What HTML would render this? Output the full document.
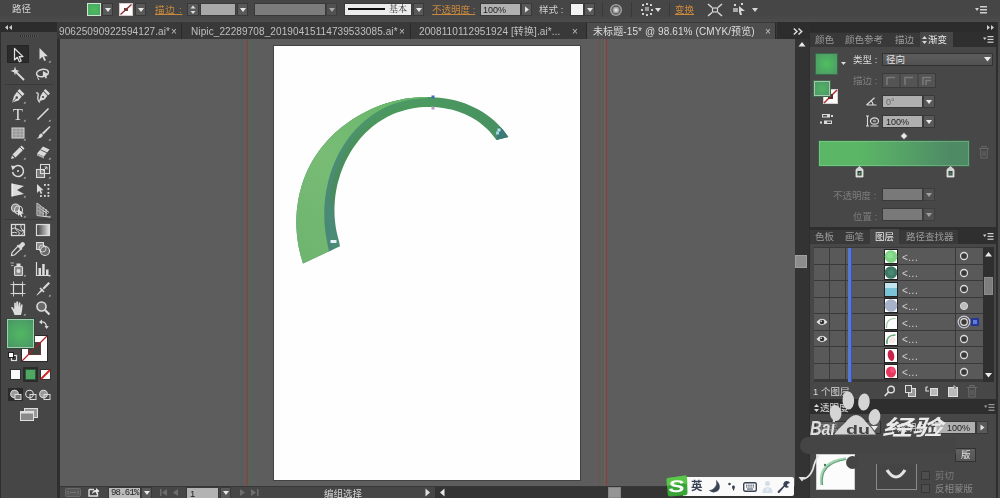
<!DOCTYPE html>
<html><head><meta charset="utf-8">
<style>
*{box-sizing:border-box;margin:0;padding:0}
html,body{width:1000px;height:498px;overflow:hidden;background:#5e5e5e;font-family:"Liberation Sans","Noto Sans CJK SC",sans-serif;font-size:9px;color:#d0d0d0}
.a{position:absolute}
.t{position:absolute;white-space:nowrap;line-height:1}
svg{position:absolute;overflow:visible}
.dd{position:absolute;background:#5a5a5a;border:1px solid #3a3a3a}
.dd:after{content:"";position:absolute;left:50%;top:50%;margin:-2px 0 0 -3px;border:3px solid transparent;border-top:4px solid #e8e8e8;border-bottom:0}
.inp{position:absolute;background:#b4b4b4;border:1px solid #3a3a3a;color:#222;white-space:nowrap;overflow:hidden;line-height:1}
.tb{font-size:10px;letter-spacing:.1px;color:#c0c0c0}
.pt{font-size:9.5px;color:#9c9c9c}
#root{position:absolute;left:0;top:0;width:1000px;height:498px;overflow:hidden;opacity:.999}
</style></head><body><div id="root">
<div class="a" style="left:60px;top:39px;width:735px;height:447px;background:#5e5e5e"></div>
<div class="a" style="left:240px;top:39px;width:16px;height:447px;background:linear-gradient(90deg,#5e5e5e 0,#546060 1px,#5a5c5c 3px,#72585a 4.500px,#6e5252 6.500px,#645048 7.200px,#646054 8.500px,#58625a 10px,#5c6060 14px,#5e5e5e 16px)"></div>
<div class="a" style="left:591px;top:39px;width:18px;height:447px;background:linear-gradient(90deg,#5e5e5e 0,#566060 1px,#5e5e60 3px,#665a5c 5px,#665a5c 8px,#585a56 9px,#5c665c 10.500px,#5a5c52 12px,#6e605e 13.500px,#704c50 15.500px,#745458 16.700px,#5e5e5e 17.500px)"></div>
<div class="a" style="left:273px;top:45px;width:308px;height:436px;background:#fff;border:1px solid #444"></div>
<svg style="left:0;top:0" width="1000" height="498" viewBox="0 0 1000 498">
<defs>
<linearGradient id="gl" x1="300" y1="260" x2="420" y2="98" gradientUnits="userSpaceOnUse"><stop offset="0" stop-color="#6fb570"/><stop offset=".5" stop-color="#79bd76"/><stop offset="1" stop-color="#68b76a"/></linearGradient>
<linearGradient id="gd" x1="325" y1="200" x2="505" y2="130" gradientUnits="userSpaceOnUse"><stop offset="0" stop-color="#4b8c77"/><stop offset=".05" stop-color="#4a8c5e"/><stop offset=".35" stop-color="#4c965e"/><stop offset=".6" stop-color="#4c9c5e"/><stop offset="1" stop-color="#489262"/></linearGradient>
<linearGradient id="gt" x1="330" y1="250" x2="400" y2="105" gradientUnits="userSpaceOnUse"><stop offset="0" stop-color="#4a8879"/><stop offset=".5" stop-color="#4b8d74"/><stop offset="1" stop-color="#4d9a66"/></linearGradient>
<clipPath id="cd"><path d="M303.0,263.4 C302.6,262.0 301.3,258.1 300.6,255.3 C299.9,252.5 299.2,249.6 298.6,246.7 C298.1,243.8 297.6,240.9 297.3,238.0 C296.9,235.1 296.7,232.2 296.5,229.3 C296.3,226.4 296.3,223.4 296.3,220.5 C296.4,217.6 296.5,214.7 296.7,211.8 C297.0,208.9 297.3,206.0 297.8,203.1 C298.2,200.2 298.7,197.4 299.3,194.6 C300.0,191.8 300.7,189.0 301.5,186.2 C302.3,183.4 303.3,180.7 304.3,178.0 C305.3,175.4 306.4,172.7 307.6,170.1 C308.8,167.6 310.1,165.0 311.5,162.5 C312.9,160.1 314.4,157.6 316.0,155.3 C317.5,152.9 319.2,150.6 320.9,148.3 C322.7,146.1 324.5,143.9 326.4,141.8 C328.2,139.6 330.2,137.6 332.3,135.6 C334.3,133.6 336.4,131.6 338.6,129.8 C340.7,127.9 343.0,126.1 345.3,124.4 C347.6,122.7 349.9,121.0 352.3,119.4 C354.7,117.9 357.2,116.4 359.7,114.9 C362.2,113.5 364.8,112.2 367.4,110.9 C370.0,109.6 372.7,108.4 375.3,107.3 C378.0,106.2 380.8,105.2 383.5,104.3 C386.3,103.3 389.1,102.5 391.9,101.7 C394.7,101.0 397.6,100.3 400.5,99.7 C403.3,99.1 406.2,98.6 409.1,98.3 C412.0,97.9 415.0,97.6 417.9,97.4 C420.8,97.2 423.7,97.1 426.6,97.1 C429.5,97.1 432.4,97.1 435.3,97.4 C438.2,97.6 441.1,97.9 443.9,98.3 C446.8,98.7 449.6,99.2 452.4,99.8 C455.2,100.4 458.0,101.2 460.7,102.0 C463.4,102.9 466.1,103.8 468.7,104.9 C471.3,106.0 473.9,107.1 476.4,108.4 C478.9,109.8 481.4,111.2 483.8,112.7 C486.2,114.3 488.5,115.9 490.7,117.7 C493.0,119.5 495.1,121.4 497.2,123.4 C499.3,125.5 501.3,127.6 503.2,129.9 C505.1,132.2 507.5,135.8 508.4,137.0 L496.4,140.0 C495.7,139.1 493.6,136.3 492.1,134.6 C490.7,132.8 489.1,131.0 487.4,129.3 C485.8,127.7 484.0,126.1 482.2,124.7 C480.5,123.2 478.6,121.9 476.7,120.6 C474.8,119.3 472.8,118.1 470.7,117.0 C468.7,115.9 466.6,114.9 464.5,114.0 C462.4,113.1 460.2,112.3 458.0,111.5 C455.8,110.8 453.6,110.2 451.4,109.6 C449.1,109.1 446.8,108.6 444.5,108.2 C442.2,107.8 439.9,107.5 437.6,107.3 C435.2,107.1 432.9,107.0 430.6,107.0 C428.2,106.9 425.9,107.0 423.6,107.1 C421.2,107.3 418.9,107.5 416.6,107.8 C414.3,108.1 412.0,108.5 409.7,109.0 C407.4,109.5 405.2,110.0 403.0,110.7 C400.8,111.3 398.6,112.0 396.4,112.8 C394.3,113.7 392.2,114.6 390.1,115.5 C388.0,116.5 386.0,117.6 384.1,118.7 C382.1,119.8 380.2,121.0 378.3,122.3 C376.5,123.6 374.6,124.9 372.9,126.3 C371.1,127.8 369.4,129.3 367.8,130.8 C366.1,132.3 364.5,134.0 363.0,135.6 C361.4,137.3 359.9,139.0 358.5,140.8 C357.1,142.6 355.7,144.4 354.4,146.3 C353.1,148.2 351.8,150.1 350.6,152.0 C349.5,154.0 348.3,156.0 347.3,158.1 C346.2,160.1 345.2,162.2 344.2,164.3 C343.3,166.4 342.4,168.6 341.6,170.8 C340.8,172.9 340.0,175.2 339.4,177.4 C338.7,179.6 338.1,181.9 337.5,184.1 C337.0,186.4 336.5,188.7 336.1,191.0 C335.7,193.3 335.4,195.6 335.1,198.0 C334.9,200.3 334.7,202.6 334.6,205.0 C334.5,207.3 334.4,209.6 334.5,212.0 C334.5,214.3 334.6,216.7 334.8,219.0 C335.0,221.3 335.3,223.7 335.6,226.0 C335.9,228.3 336.4,230.6 336.9,232.9 C337.4,235.2 338.1,237.5 338.6,239.7 C339.2,241.9 339.8,245.2 340.0,246.3 Z"/></clipPath>
</defs>
<path d="M303.0,263.4 C302.6,262.0 301.3,258.1 300.6,255.3 C299.9,252.5 299.2,249.6 298.6,246.7 C298.1,243.8 297.6,240.9 297.3,238.0 C296.9,235.1 296.7,232.2 296.5,229.3 C296.3,226.4 296.3,223.4 296.3,220.5 C296.4,217.6 296.5,214.7 296.7,211.8 C297.0,208.9 297.3,206.0 297.8,203.1 C298.2,200.2 298.7,197.4 299.3,194.6 C300.0,191.8 300.7,189.0 301.5,186.2 C302.3,183.4 303.3,180.7 304.3,178.0 C305.3,175.4 306.4,172.7 307.6,170.1 C308.8,167.6 310.1,165.0 311.5,162.5 C312.9,160.1 314.4,157.6 316.0,155.3 C317.5,152.9 319.2,150.6 320.9,148.3 C322.7,146.1 324.5,143.9 326.4,141.8 C328.2,139.6 330.2,137.6 332.3,135.6 C334.3,133.6 336.4,131.6 338.6,129.8 C340.7,127.9 343.0,126.1 345.3,124.4 C347.6,122.7 349.9,121.0 352.3,119.4 C354.7,117.9 357.2,116.4 359.7,114.9 C362.2,113.5 364.8,112.2 367.4,110.9 C370.0,109.6 372.7,108.4 375.3,107.3 C378.0,106.2 380.8,105.2 383.5,104.3 C386.3,103.3 389.1,102.5 391.9,101.7 C394.7,101.0 397.6,100.3 400.5,99.7 C403.3,99.1 406.2,98.6 409.1,98.3 C412.0,97.9 415.0,97.6 417.9,97.4 C420.8,97.2 423.7,97.1 426.6,97.1 C429.5,97.1 432.4,97.1 435.3,97.4 C438.2,97.6 441.1,97.9 443.9,98.3 C446.8,98.7 449.6,99.2 452.4,99.8 C455.2,100.4 458.0,101.2 460.7,102.0 C463.4,102.9 466.1,103.8 468.7,104.9 C471.3,106.0 473.9,107.1 476.4,108.4 C478.9,109.8 481.4,111.2 483.8,112.7 C486.2,114.3 488.5,115.9 490.7,117.7 C493.0,119.5 495.1,121.4 497.2,123.4 C499.3,125.5 501.3,127.6 503.2,129.9 C505.1,132.2 507.5,135.8 508.4,137.0 L496.4,140.0 C495.7,139.1 493.6,136.3 492.1,134.6 C490.7,132.8 489.1,131.0 487.4,129.3 C485.8,127.7 484.0,126.1 482.2,124.7 C480.5,123.2 478.6,121.9 476.7,120.6 C474.8,119.3 472.8,118.1 470.7,117.0 C468.7,115.9 466.6,114.9 464.5,114.0 C462.4,113.1 460.2,112.3 458.0,111.5 C455.8,110.8 453.6,110.2 451.4,109.6 C449.1,109.1 446.8,108.6 444.5,108.2 C442.2,107.8 439.9,107.5 437.6,107.3 C435.2,107.1 432.9,107.0 430.6,107.0 C428.2,106.9 425.9,107.0 423.6,107.1 C421.2,107.3 418.9,107.5 416.6,107.8 C414.3,108.1 412.0,108.5 409.7,109.0 C407.4,109.5 405.2,110.0 403.0,110.7 C400.8,111.3 398.6,112.0 396.4,112.8 C394.3,113.7 392.2,114.6 390.1,115.5 C388.0,116.5 386.0,117.6 384.1,118.7 C382.1,119.8 380.2,121.0 378.3,122.3 C376.5,123.6 374.6,124.9 372.9,126.3 C371.1,127.8 369.4,129.3 367.8,130.8 C366.1,132.3 364.5,134.0 363.0,135.6 C361.4,137.3 359.9,139.0 358.5,140.8 C357.1,142.6 355.7,144.4 354.4,146.3 C353.1,148.2 351.8,150.1 350.6,152.0 C349.5,154.0 348.3,156.0 347.3,158.1 C346.2,160.1 345.2,162.2 344.2,164.3 C343.3,166.4 342.4,168.6 341.6,170.8 C340.8,172.9 340.0,175.2 339.4,177.4 C338.7,179.6 338.1,181.9 337.5,184.1 C337.0,186.4 336.5,188.7 336.1,191.0 C335.7,193.3 335.4,195.6 335.1,198.0 C334.9,200.3 334.7,202.6 334.6,205.0 C334.5,207.3 334.4,209.6 334.5,212.0 C334.5,214.3 334.6,216.7 334.8,219.0 C335.0,221.3 335.3,223.7 335.6,226.0 C335.9,228.3 336.4,230.6 336.9,232.9 C337.4,235.2 338.1,237.5 338.6,239.7 C339.2,241.9 339.8,245.2 340.0,246.3 Z" fill="url(#gd)"/>
<path d="M329.0,251.3 C328.7,249.8 327.8,245.4 327.2,242.4 C326.6,239.4 326.0,236.4 325.6,233.4 C325.2,230.4 324.8,227.3 324.6,224.3 C324.4,221.2 324.3,218.1 324.3,215.1 C324.2,212.0 324.3,208.9 324.5,205.8 C324.7,202.7 325.0,199.6 325.4,196.6 C325.8,193.5 326.3,190.4 326.9,187.4 C327.5,184.4 328.2,181.4 329.0,178.4 C329.9,175.4 330.8,172.5 331.8,169.6 C332.8,166.7 333.9,163.8 335.2,161.0 C336.4,158.2 337.7,155.5 339.1,152.8 C340.6,150.1 342.1,147.5 343.7,144.9 C345.4,142.4 347.1,139.9 348.9,137.5 C350.8,135.1 352.7,132.7 354.7,130.5 C356.7,128.3 358.9,126.1 361.1,124.1 C363.3,122.1 365.6,120.1 367.9,118.3 C370.3,116.4 372.8,114.7 375.3,113.1 C377.8,111.5 380.4,110.0 383.1,108.6 C385.8,107.2 388.6,106.0 391.4,104.8 C394.3,103.7 397.2,102.7 400.1,101.9 C403.1,101.1 406.2,100.4 409.3,99.8 C412.4,99.3 415.6,99.0 418.7,98.7 C421.9,98.3 426.5,98.1 428.0,98.0" fill="none" stroke="url(#gt)" stroke-width="9" clip-path="url(#cd)"/>
<path d="M303.0,263.4 C302.6,262.0 301.3,258.1 300.6,255.3 C299.9,252.5 299.2,249.6 298.6,246.7 C298.1,243.8 297.6,240.9 297.3,238.0 C296.9,235.1 296.7,232.2 296.5,229.3 C296.3,226.4 296.3,223.4 296.3,220.5 C296.4,217.6 296.5,214.7 296.7,211.8 C297.0,208.9 297.3,206.0 297.8,203.1 C298.2,200.2 298.7,197.4 299.3,194.6 C300.0,191.8 300.7,189.0 301.5,186.2 C302.3,183.4 303.3,180.7 304.3,178.0 C305.3,175.4 306.4,172.7 307.6,170.1 C308.8,167.6 310.1,165.0 311.5,162.5 C312.9,160.1 314.4,157.6 316.0,155.3 C317.5,152.9 319.2,150.6 320.9,148.3 C322.7,146.1 324.5,143.9 326.4,141.8 C328.2,139.6 330.2,137.6 332.3,135.6 C334.3,133.6 336.4,131.6 338.6,129.8 C340.7,127.9 343.0,126.1 345.3,124.4 C347.6,122.7 349.9,121.0 352.3,119.4 C354.7,117.9 357.2,116.4 359.7,114.9 C362.2,113.5 364.8,112.2 367.4,110.9 C370.0,109.6 372.7,108.4 375.3,107.3 C378.0,106.2 380.8,105.2 383.5,104.3 C386.3,103.3 389.1,102.5 391.9,101.7 C394.7,101.0 397.6,100.3 400.5,99.7 C403.3,99.1 406.2,98.6 409.1,98.3 C412.0,97.9 415.0,97.6 417.9,97.4 C420.8,97.2 425.2,97.1 426.6,97.1 L428.0,98.0 C426.5,98.1 421.9,98.3 418.7,98.7 C415.6,99.0 412.4,99.3 409.3,99.8 C406.2,100.4 403.1,101.1 400.1,101.9 C397.2,102.7 394.3,103.7 391.4,104.8 C388.6,106.0 385.8,107.2 383.1,108.6 C380.4,110.0 377.8,111.5 375.3,113.1 C372.8,114.7 370.3,116.4 367.9,118.3 C365.6,120.1 363.3,122.1 361.1,124.1 C358.9,126.1 356.7,128.3 354.7,130.5 C352.7,132.7 350.8,135.1 348.9,137.5 C347.1,139.9 345.4,142.4 343.7,144.9 C342.1,147.5 340.6,150.1 339.1,152.8 C337.7,155.5 336.4,158.2 335.2,161.0 C333.9,163.8 332.8,166.7 331.8,169.6 C330.8,172.5 329.9,175.4 329.0,178.4 C328.2,181.4 327.5,184.4 326.9,187.4 C326.3,190.4 325.8,193.5 325.4,196.6 C325.0,199.6 324.7,202.7 324.5,205.8 C324.3,208.9 324.2,212.0 324.3,215.1 C324.3,218.1 324.4,221.2 324.6,224.3 C324.8,227.3 325.2,230.4 325.6,233.4 C326.0,236.4 326.6,239.4 327.2,242.4 C327.8,245.4 328.7,249.8 329.0,251.3 Z" fill="url(#gl)"/>
<path d="M496.4,140 L508.4,137 L503,129.8 L499,126 Z" fill="#3d7b78"/>
<rect x="431.5" y="95.5" width="3" height="3" fill="#3f6fb0"/>
<rect x="431.5" y="106.5" width="3" height="3" fill="#b79bc4"/>
<rect x="497.5" y="128.5" width="3" height="3" fill="#bfe4f2"/>
<rect x="496" y="131.5" width="3" height="3" fill="#9fd4ea"/>
<rect x="330.5" y="240" width="6" height="3" fill="#e8f2f8"/>
</svg>
<div class="a" style="left:0;top:0;width:1000px;height:22px;background:linear-gradient(#474747 0,#474747 16px,#494949 16px,#494949 19px,#4c4c4c 19px)"></div>
<div class="t" style="left:12px;top:4px;font-size:9.5px;color:#d4d4d4">路径</div>
<div class="a" style="left:87px;top:3px;width:14px;height:13px;background:radial-gradient(circle,#4cc05e,#4ba666);border:1px solid #cfe6d2"></div>
<div class="dd" style="left:102px;top:3px;width:11px;height:13px"></div>
<div class="a" style="left:119px;top:3px;width:14px;height:13px;background:#fff;border:1px solid #d8c8c8"></div>
<svg style="left:119px;top:3px" width="14" height="13"><path d="M1.5,11.5 L12.5,1.5" stroke="#8a2a2a" stroke-width="1.3"/><rect x="5" y="5" width="4" height="3" fill="#7a3a3a"/></svg>
<div class="dd" style="left:135px;top:3px;width:11px;height:13px"></div>
<div class="t" style="left:155px;top:5px;font-size:9.5px;color:#c98a3e;text-decoration:underline;letter-spacing:.8px">描边 :</div>
<div class="a" style="left:187px;top:3px;width:12px;height:13px;background:#5a5a5a;border:1px solid #3a3a3a"></div>
<svg style="left:187px;top:3px" width="12" height="13"><path d="M3.5,5.5 L6,2.5 L8.5,5.5Z M3.5,8 L6,11 L8.5,8Z" fill="#ddd"/></svg>
<div class="inp" style="left:200px;top:3px;width:36px;height:13px;background:#a9a9a9"></div>
<div class="dd" style="left:237px;top:3px;width:11px;height:13px"></div>
<div class="inp" style="left:254px;top:3px;width:72px;height:13px;background:#7d7d7d"></div>
<div class="dd" style="left:326px;top:3px;width:11px;height:13px;opacity:.6"></div>
<div class="a" style="left:344px;top:3px;width:68px;height:13px;background:#ededed;border:1px solid #3a3a3a"></div>
<div class="a" style="left:348px;top:8px;width:37px;height:2px;background:#111"></div>
<div class="t" style="left:389px;top:5px;font-size:9px;color:#333;font-family:'Liberation Serif','Noto Serif CJK SC',serif">基本</div>
<div class="dd" style="left:413px;top:3px;width:11px;height:13px"></div>
<div class="t" style="left:432px;top:5px;font-size:9.5px;color:#c98a3e;text-decoration:underline">不透明度 :</div>
<div class="inp" style="left:480px;top:3px;width:41px;height:13px;background:#b2b2b2;font-size:9px;padding:2px 0 0 2px">100%</div>
<div class="a" style="left:521px;top:3px;width:11px;height:13px;background:#5a5a5a;border:1px solid #3a3a3a"></div>
<svg style="left:521px;top:3px" width="11" height="13"><path d="M4,3.5 L8,6.5 L4,9.5Z" fill="#e4e4e4"/></svg>
<div class="t" style="left:539px;top:5px;font-size:9.5px;color:#d0d0d0">样式 :</div>
<div class="a" style="left:570px;top:3px;width:14px;height:13px;background:#f4f4f4;border:1px solid #3a3a3a"></div>
<div class="dd" style="left:584px;top:3px;width:11px;height:13px"></div>
<div class="a" style="left:602px;top:2px;width:1px;height:15px;background:#3a3a3a"></div>
<svg style="left:609px;top:3px" width="14" height="14"><circle cx="7" cy="7" r="6" fill="#a6a6a6"/><circle cx="7" cy="7" r="4" fill="none" stroke="#5a5a5a" stroke-width="1.300"/><circle cx="7" cy="7" r="1.700" fill="#e0e0e0"/></svg>
<div class="a" style="left:631px;top:2px;width:1px;height:15px;background:#3a3a3a"></div>
<svg style="left:641px;top:3px" width="22" height="14"><g fill="#cfcfcf"><rect x="1" y="1" width="2" height="2"/><rect x="5" y="0" width="2" height="2"/><rect x="9" y="1" width="2" height="2"/><rect x="0" y="6" width="2" height="2"/><rect x="10" y="6" width="2" height="2"/><rect x="1" y="10" width="2" height="2"/><rect x="5" y="11" width="2" height="2"/><rect x="9" y="10" width="2" height="2"/><rect x="4" y="4" width="4" height="4" fill="#9a9a9a"/><path d="M14,5 L20,5 L17,9Z" fill="#e0e0e0"/></g></svg>
<div class="a" style="left:669px;top:2px;width:1px;height:15px;background:#3a3a3a"></div>
<div class="t" style="left:675px;top:5px;font-size:9.5px;color:#d08a3e;text-decoration:underline">变换</div>
<svg style="left:707px;top:3px" width="16" height="14"><g stroke="#d8d8d8" stroke-width="1.5" fill="none"><path d="M1,1 L5,4.5 M15,1 L11,4.5 M1,13 L5,9.5 M15,13 L11,9.5"/><rect x="5.5" y="5" width="5" height="4" stroke-width="1.2"/></g></svg>
<svg style="left:733px;top:3px" width="28" height="14"><g fill="#d8d8d8"><path d="M6,3 L12,8 L8,8 L9,12 L7,12 L6,9 Z"/><rect x="0" y="5" width="5" height="4" fill="#aaa"/><rect x="1" y="1" width="2" height="2"/><rect x="8" y="0" width="2" height="2"/><path d="M19,5 L25,5 L22,9Z"/></g></svg>
<svg style="left:975px;top:5px" width="14" height="10"><g fill="#d0d0d0"><path d="M0,3 L4,3 L2,6Z"/><rect x="5" y="1" width="7" height="1.5"/><rect x="5" y="4" width="7" height="1.5"/><rect x="5" y="7" width="7" height="1.5"/></g></svg>
<div class="a" style="left:57px;top:22px;width:752px;height:17px;background:#3a3a3a"></div>
<div class="a" style="left:586px;top:23px;width:190px;height:16px;background:#4e4e4e;border-left:1px solid #2a2a2a;border-right:1px solid #2a2a2a"></div>
<div class="a" style="left:777px;top:22px;width:32px;height:17px;background:#2e2e2e"></div>
<div class="t tb" style="left:59px;top:27px">90625090922594127.ai*</div>
<div class="t tb" style="left:171px;top:27px">×</div>
<div class="a" style="left:181px;top:23px;width:1px;height:16px;background:#2a2a2a"></div>
<div class="t tb" style="left:191px;top:27px">Nipic_22289708_20190415114739533085.ai*</div>
<div class="t tb" style="left:399px;top:27px">×</div>
<div class="a" style="left:410px;top:23px;width:1px;height:16px;background:#2a2a2a"></div>
<div class="t tb" style="left:419px;top:27px">2008110112951924 [转换].ai*...</div>
<div class="t tb" style="left:572px;top:27px">×</div>
<div class="t tb" style="left:593px;top:27px;color:#dedede">未标题-15* @ 98.61% (CMYK/预览)</div>
<div class="t tb" style="left:765px;top:27px;color:#c8c8c8">×</div>
<svg style="left:793px;top:28px" width="10" height="7"><path d="M.8,.5 L4,3.500 L.8,6.500 M5.500,.5 L8.700,3.500 L5.500,6.500" fill="none" stroke="#dcdcdc" stroke-width="1.500"/></svg>
<div class="a" style="left:60px;top:486px;width:735px;height:12px;background:#474747;border-top:1px solid #383838"></div>
<svg style="left:65px;top:488px" width="16" height="9"><rect x=".5" y=".5" width="15" height="8" rx="1" fill="#585858" stroke="#6a6a6a"/><path d="M4,3 L2,4.500 L4,6 M12,3 L14,4.500 L12,6 M5,4.500 H11" stroke="#777" fill="none"/></svg>
<svg style="left:88px;top:487px" width="12" height="10"><path d="M1,2.500 H6 M1,2.500 V9 H9.500 V6" fill="none" stroke="#e0e0e0" stroke-width="1.400"/><path d="M4,7 Q4.500,3 8,3 V1 L11.500,4 L8,7 V5 Q5.500,5 4,7Z" fill="#e8e8e8"/></svg>
<div class="inp" style="left:108px;top:487px;width:33px;height:12px;background:#bdbdbd;font-size:9px;padding:1px 0 0 2px;font-family:'Liberation Mono','Noto Sans CJK SC',monospace;letter-spacing:-.8px">98.61%</div>
<div class="dd" style="left:141px;top:487px;width:11px;height:12px"></div>
<svg style="left:159px;top:489px" width="22" height="8"><g fill="#6e6e6e"><rect x="1" y="0" width="1.500" height="7"/><path d="M8,0 L3,3.500 L8,7Z"/><path d="M19,0 L14,3.500 L19,7Z"/></g></svg>
<div class="inp" style="left:186px;top:487px;width:33px;height:12px;background:#b4b4b4;font-size:9.5px;padding:1px 0 0 3px">1</div>
<div class="dd" style="left:220px;top:487px;width:11px;height:12px"></div>
<svg style="left:239px;top:489px" width="22" height="8"><g fill="#6e6e6e"><path d="M1,0 L6,3.500 L1,7Z"/><path d="M12,0 L17,3.500 L12,7Z"/><rect x="18" y="0" width="1.500" height="7"/></g></svg>
<div class="t" style="left:324px;top:489px;font-size:9.5px;color:#d8d8d8">编组选择</div>
<svg style="left:425px;top:488px" width="6" height="9"><path d="M.5,.5 L5,4.500 L.5,8.500Z" fill="#e0e0e0"/></svg>
<div class="a" style="left:435px;top:487px;width:360px;height:11px;background:#353535"></div>
<svg style="left:439px;top:488px" width="6" height="9"><path d="M5.500,.5 L1,4.500 L5.500,8.500Z" fill="#e8e8e8"/></svg>
<div class="a" style="left:608px;top:487px;width:13px;height:11px;background:#969696;border:1px solid #858585"></div>
<!-- vertical scrollbar -->
<div class="a" style="left:795px;top:39px;width:14px;height:459px;background:#343434"></div>
<svg style="left:798px;top:42px" width="8" height="5"><path d="M4,0 L7.500,4.500 L.5,4.500Z" fill="#e8e8e8"/></svg>
<svg style="left:798px;top:477px" width="8" height="5"><path d="M4,4.500 L7.500,0 L.5,0Z" fill="#e0e0e0"/></svg>
<div class="a" style="left:795px;top:255px;width:12px;height:13px;background:#8e8e8e;border:1px solid #a0a0a0"></div>
<!-- sogou IME bar -->
<div class="a" style="left:683px;top:477px;width:111px;height:19px;background:#fbfbfb;border-radius:0 2px 2px 0"></div>
<svg style="left:666px;top:474px" width="22" height="23" viewBox="0 0 22 23"><path d="M2,4 L19,1.500 Q21,1.500 21,3.500 L21.500,19 Q21.500,21 19.500,21.300 L4,22.500 Q2,22.500 1.800,20.500 L.5,6 Q.5,4.200 2,4Z" fill="#3aa63a"/><path d="M2,4 L19,1.500 Q21,1.500 21,3.500 L21.200,10 Q10,8 1,12 L.5,6 Q.5,4.200 2,4Z" fill="#5cc84a"/><text x="4" y="18" font-family="Liberation Sans,sans-serif" font-weight="bold" font-size="17" fill="#fff" textLength="16" lengthAdjust="spacingAndGlyphs" transform="skewX(-6)">S</text></svg>
<div class="t" style="left:691px;top:481px;font-size:11.500px;font-weight:bold;color:#3a4456">英</div>
<svg style="left:709px;top:480px" width="12" height="13"><path d="M7.500,.5 Q8.500,5 5.500,8 Q3,10.500 .5,10.500 Q4,13.500 8.500,11 Q13,7 7.500,.5Z" fill="#3a4456" stroke="#3a4456" stroke-width=".6"/></svg>
<svg style="left:728px;top:482px" width="8" height="10"><circle cx="1.500" cy="2" r="1.300" fill="#3a4456"/><path d="M5,4 Q7.500,5 6,8 L5,9 Q5.500,7 4,6Z" fill="#3a4456"/><circle cx="5.500" cy="5" r="1.400" fill="#3a4456"/></svg>
<svg style="left:743px;top:482px" width="14" height="10"><rect x=".7" y=".7" width="12.600" height="8.600" rx="1.500" fill="none" stroke="#3a4456" stroke-width="1.400"/><path d="M3,3.200 H11 M3,5 H11" stroke="#3a4456" stroke-width="1" stroke-dasharray="1.400 .8"/><path d="M4,7 H10" stroke="#3a4456" stroke-width="1"/></svg>
<svg style="left:762px;top:480px" width="11" height="14"><circle cx="5.500" cy="3.500" r="2.500" fill="#d4dfe8"/><path d="M.5,13 Q.5,7 5.500,7 Q10.500,7 10.500,13Z" fill="#d4dfe8"/><path d="M5.500,7 L4,9 L5.500,12 L7,9Z" fill="#e8f0f6"/></svg>
<svg style="left:777px;top:480px" width="14" height="14"><path d="M9,1 Q12,.5 13,3 L10.500,4 L10,5.500 L12,7 Q9.500,8.500 7.500,6.800 L2.500,12.800 Q1.500,13.500 .8,12.500 Q.3,11.700 1,11 L6.500,5.800 Q5.500,2.500 9,1Z" fill="#3a4456"/></svg>
<div class="a" style="left:809px;top:22px;width:191px;height:476px;background:#2f2f2f"></div>
<div class="a" style="left:998px;top:22px;width:2px;height:476px;background:#4a4a4a"></div>
<!-- gradient panel -->
<div class="a" style="left:810px;top:22px;width:186px;height:10px;background:#2d2d2d"></div>
<svg style="left:987px;top:25px" width="8" height="5"><path d="M0,0 L3,2.500 L0,5Z M4,0 L7,2.500 L4,5Z" fill="#d0d0d0"/></svg>
<div class="a" style="left:810px;top:32px;width:186px;height:15px;background:#303030"></div>
<div class="a" style="left:810px;top:33px;width:110px;height:14px;background:#3a3a3a"></div>
<div class="a" style="left:810px;top:47px;width:186px;height:180px;background:#484848"></div>
<div class="a" style="left:920px;top:32px;width:33px;height:16px;background:#484848"></div>
<div class="t pt" style="left:815px;top:35px">颜色</div>
<div class="t pt" style="left:845px;top:35px">颜色参考</div>
<div class="t pt" style="left:895px;top:35px">描边</div>
<svg style="left:922px;top:36px" width="5" height="8"><path d="M2.500,0 L5,3 H0Z M2.500,8 L5,5 H0Z" fill="#d8d8d8"/></svg>
<div class="t pt" style="left:928px;top:35px;color:#e6e6e6">渐变</div>
<svg style="left:983px;top:36px" width="11" height="7"><g fill="#d0d0d0"><path d="M0,1.500 L3.500,1.500 L1.700,4Z"/><rect x="4.500" y="0" width="6" height="1.200"/><rect x="4.500" y="2.800" width="6" height="1.200"/><rect x="4.500" y="5.600" width="6" height="1.200"/></g></svg>
<div class="a" style="left:815px;top:53px;width:23px;height:22px;background:radial-gradient(circle at 50% 50%,#4fc25f 0%,#4fae63 45%,#4e9866 100%);border:1px solid #3a6a48"></div>
<svg style="left:841px;top:62px" width="5" height="3"><path d="M0,0 H5 L2.500,3Z" fill="#dcdcdc"/></svg>
<div class="t" style="left:853px;top:55px;font-size:9.500px;color:#dadada">类型 :</div>
<div class="a" style="left:882px;top:53px;width:111px;height:13px;background:linear-gradient(#5e5e5e,#525252);border:1px solid #333"></div>
<div class="t" style="left:886px;top:55px;font-size:9.500px;color:#e4e4e4">径向</div>
<svg style="left:984px;top:57px" width="7" height="5"><path d="M0,0 H7 L3.500,4.500Z" fill="#ececec"/></svg>
<div class="t" style="left:853px;top:76px;font-size:9.500px;color:#7e7e7e">描边 :</div>
<div class="a" style="left:882px;top:73px;width:54px;height:15px;background:#555;border:1px solid #3c3c3c"></div>
<svg style="left:882px;top:73px" width="54" height="15"><g fill="none" stroke="#7c7c7c" stroke-width="1.500"><path d="M5,12 V4.500 H13"/><path d="M23,12 V4.500 H31"/><path d="M41,12 V4.500 H49 M44,12 V7.500 H49"/></g><path d="M18,0 V15 M36,0 V15" stroke="#3c3c3c"/></svg>
<div class="a" style="left:823px;top:89px;width:15px;height:15px;background:#fff;border:1px solid #d8d0d0"></div>
<svg style="left:823px;top:89px" width="15" height="15"><path d="M1,14 L14,1" stroke="#b02828" stroke-width="1.500"/><rect x="5" y="5" width="5" height="5" fill="#6a2a2a"/></svg>
<div class="a" style="left:814px;top:81px;width:16px;height:15px;background:radial-gradient(circle,#52b466,#4c9a66);border:1px solid #a8c8b0;box-shadow:0 0 0 1px #3f6a4c"></div>
<svg style="left:866px;top:97px" width="11" height="9"><path d="M.5,8 H10.500 M.5,8 L8.500,.8 M7,8 Q7,5 5,4" fill="none" stroke="#dcdcdc" stroke-width="1.200"/></svg>
<div class="inp" style="left:882px;top:95px;width:41px;height:13px;background:#b0b0b0;font-size:9px;padding:2px 0 0 3px;color:#6a6a6a">0°</div>
<div class="dd" style="left:923px;top:95px;width:12px;height:13px"></div>
<svg style="left:866px;top:115px" width="13" height="12"><path d="M1.500,.5 V11.500 M0,1 H3 M0,11 H3" stroke="#dcdcdc" stroke-width="1.100"/><ellipse cx="8.500" cy="6" rx="4" ry="3.200" fill="none" stroke="#dcdcdc" stroke-width="1.200"/><ellipse cx="8.500" cy="6" rx="1.800" ry="1.300" fill="#9a9a9a"/><path d="M4.500,11 H12.500" stroke="#dcdcdc"/></svg>
<div class="inp" style="left:882px;top:115px;width:41px;height:13px;background:#b0b0b0;font-size:9px;padding:2px 0 0 3px;color:#222">100%</div>
<div class="dd" style="left:923px;top:115px;width:12px;height:13px"></div>
<svg style="left:820px;top:113px" width="13" height="12"><g fill="#dcdcdc"><rect x="2" y="1" width="8" height="3.500"/><rect x="4" y="7.500" width="8" height="3.500"/><rect x="0" y="8.500" width="2" height="2"/><rect x="11" y="2" width="2" height="2"/></g><rect x="3" y="2" width="4" height="1.500" fill="#484848"/><rect x="7" y="8.500" width="4" height="1.500" fill="#484848"/></svg>
<svg style="left:900px;top:132px" width="8" height="8"><path d="M4,.5 L7.500,4 L4,7.500 L.5,4Z" fill="#ececec" stroke="#555" stroke-width=".6"/></svg>
<div class="a" style="left:818px;top:140px;width:152px;height:27px;background:linear-gradient(90deg,#5cb767 0%,#5cb767 27%,#56a367 57%,#4f8c66 87%,#4f8c66 100%);border:1px solid #3c5f48;box-shadow:inset 0 0 0 1px rgba(200,240,210,.25)"></div>
<svg style="left:855px;top:166px" width="9" height="12"><path d="M4.500,.5 L8,3.500 V11 H1 V3.500Z" fill="#d4d4d4" stroke="#eee" stroke-width=".8"/><rect x="2.500" y="5" width="4" height="4.500" fill="#2c3a30"/><rect x="3.500" y="6.500" width="2" height="2" fill="#5cb866"/></svg>
<svg style="left:946px;top:166px" width="9" height="12"><path d="M4.500,.5 L8,3.500 V11 H1 V3.500Z" fill="#d4d4d4" stroke="#eee" stroke-width=".8"/><rect x="2.500" y="5" width="4" height="4.500" fill="#3a4a40"/><rect x="3.500" y="6.500" width="2" height="2" fill="#4f8c66"/></svg>
<svg style="left:978px;top:145px" width="12" height="14"><g fill="none" stroke="#666" stroke-width="1.100"><path d="M1,3.500 H11 M4,3.500 V1.500 H8 V3.500 M2.500,3.500 L3,13 H9 L9.500,3.500 M5,6 V11 M7,6 V11"/></g></svg>
<div class="t" style="left:833px;top:191px;font-size:9.500px;color:#7e7e7e">不透明度 :</div>
<div class="inp" style="left:882px;top:188px;width:41px;height:13px;background:#7a7a7a"></div>
<div class="dd" style="left:923px;top:188px;width:12px;height:13px;opacity:.55"></div>
<div class="t" style="left:853px;top:212px;font-size:9.500px;color:#7e7e7e">位置 :</div>
<div class="inp" style="left:882px;top:208px;width:41px;height:13px;background:#7a7a7a"></div>
<div class="dd" style="left:923px;top:208px;width:12px;height:13px;opacity:.55"></div>
<!-- layers panel -->
<div class="a" style="left:810px;top:229px;width:186px;height:15px;background:#303030"></div>
<div class="a" style="left:810px;top:230px;width:148px;height:14px;background:#3a3a3a"></div>
<div class="a" style="left:810px;top:244px;width:186px;height:155px;background:#484848"></div>
<div class="a" style="left:870px;top:229px;width:29px;height:16px;background:#484848"></div>
<div class="t pt" style="left:815px;top:232px">色板</div>
<div class="t pt" style="left:845px;top:232px">画笔</div>
<div class="t pt" style="left:875px;top:232px;color:#ececec">图层</div>
<div class="t pt" style="left:906px;top:232px">路径查找器</div>
<svg style="left:983px;top:233px" width="11" height="7"><g fill="#d0d0d0"><path d="M0,1.500 L3.500,1.500 L1.700,4Z"/><rect x="4.500" y="0" width="6" height="1.200"/><rect x="4.500" y="2.800" width="6" height="1.200"/><rect x="4.500" y="5.600" width="6" height="1.200"/></g></svg>
<!-- transparency panel -->
<div class="a" style="left:810px;top:400px;width:186px;height:14px;background:#2f2f2f"></div>
<div class="a" style="left:810px;top:414px;width:186px;height:84px;background:#484848"></div>
<svg style="left:814px;top:404px" width="5" height="8"><path d="M2.500,0 L5,3 H0Z M2.500,8 L5,5 H0Z" fill="#d8d8d8"/></svg>
<div class="t pt" style="left:820px;top:403px;color:#e0e0e0">透明度</div>
<svg style="left:984px;top:404px" width="11" height="7"><g fill="#9a9a9a"><path d="M0,1.500 L3.500,1.500 L1.700,4Z"/><rect x="4.500" y="0" width="6" height="1.200"/><rect x="4.500" y="2.800" width="6" height="1.200"/><rect x="4.500" y="5.600" width="6" height="1.200"/></g></svg>
<div class="a" style="left:815px;top:421px;width:66px;height:13px;background:linear-gradient(#5e5e5e,#525252);border:1px solid #333"></div>
<div class="t" style="left:819px;top:423px;font-size:9.500px;color:#8a8a8a">正常</div>
<svg style="left:871px;top:426px" width="7" height="5"><path d="M0,0 H7 L3.500,4.500Z" fill="#ececec"/></svg>
<div class="t" style="left:888px;top:423px;font-size:9.500px;color:#d4d4d4">不透明度 :</div>
<div class="inp" style="left:934px;top:421px;width:42px;height:13px;background:#b0b0b0;font-size:9px;padding:2px 0 0 12px;color:#222">100%</div>
<div class="a" style="left:976px;top:421px;width:12px;height:13px;background:#5a5a5a;border:1px solid #3a3a3a"></div>
<svg style="left:976px;top:421px" width="12" height="13"><path d="M4.500,3.500 L8.500,6.500 L4.500,9.500Z" fill="#e4e4e4"/></svg>
<div class="a" style="left:816px;top:454px;width:39px;height:36px;background:#fdfdfd;border:1px solid #cfcfcf"></div>
<svg style="left:816px;top:454px" width="39" height="36"><path d="M5.500,31 Q2,8 30,4.500" fill="none" stroke="#a4d4b4" stroke-width="2.600"/><path d="M6.500,31 Q3.500,9.500 30,5.500" fill="none" stroke="#5f9f78" stroke-width="1.200"/><circle cx="9" cy="11" r="1.200" fill="#4a7a5a"/></svg>
<div class="a" style="left:876px;top:464px;width:41px;height:26px;border:1px solid #8a8a8a;border-top:0;background:#464646"></div>
<div class="a" style="left:955px;top:448px;width:21px;height:14px;background:linear-gradient(#626262,#555);border:1px solid #333"></div>
<div class="t" style="left:961px;top:450px;font-size:9.500px;color:#e0e0e0">版</div>
<div class="a" style="left:921px;top:471px;width:9px;height:9px;background:#4e4e4e;border:1px solid #383838"></div>
<div class="t" style="left:935px;top:471px;font-size:9.500px;color:#7c7c7c">剪切</div>
<div class="a" style="left:921px;top:484px;width:9px;height:9px;background:#4e4e4e;border:1px solid #383838"></div>
<div class="t" style="left:935px;top:484px;font-size:9.500px;color:#8a8a8a">反相蒙版</div>
<!-- watermark -->
<div class="a" style="left:800px;top:437px;width:156px;height:17px;background:#464646;border-radius:9px 0 0 9px"></div>
<div class="a" style="left:846px;top:456px;width:13px;height:13px;border-radius:50%;background:#464646"></div>
<svg style="left:790px;top:385px" width="170" height="110" viewBox="790 385 170 110">
<g fill="#d6d6d6">
<ellipse cx="835.600" cy="413" rx="5.800" ry="8" transform="rotate(-8 835.600 413)"/>
<ellipse cx="848.300" cy="400.500" rx="5.800" ry="9" transform="rotate(-4 848.300 400.500)"/>
<ellipse cx="864" cy="402" rx="5.800" ry="8.500" transform="rotate(6 864 402)"/>
<ellipse cx="874.500" cy="417" rx="5.800" ry="8" transform="rotate(10 874.500 417)"/>
<path d="M834,434.500 Q838,429 845,423 Q851,415 856,415 Q861,415 866,422 Q872,428 876,434.500 Z"/>
</g>
<text x="846" y="434" font-family="Liberation Sans,sans-serif" font-weight="bold" font-size="13" fill="#484848" textLength="24" lengthAdjust="spacingAndGlyphs">du</text>
<text x="810" y="434.500" font-family="Liberation Sans,sans-serif" font-weight="bold" font-style="italic" font-size="21" fill="#dedede" textLength="25" lengthAdjust="spacingAndGlyphs">Bai</text>
<text x="882" y="435" font-family="Liberation Sans,Noto Sans CJK SC,sans-serif" font-weight="bold" font-style="italic" font-size="29" fill="#ececec" textLength="60" lengthAdjust="spacingAndGlyphs" transform="translate(0 117.500) scale(1 .73)">经验</text>
<path d="M804,479 Q810,477 813,469 Q815,460 819,455.500" fill="none" stroke="#e6e6e6" stroke-width="1.800"/>
<path d="M887,470 Q896,484 905,470" fill="none" stroke="#e4e4e4" stroke-width="3.200"/>
</svg>
<div class="a" style="left:0;top:39px;width:60px;height:459px;background:#2f2f2f"></div>
<div class="a" style="left:0;top:22px;width:57px;height:17px;background:#2f2f2f"></div>
<div class="a" style="left:1px;top:22px;width:56px;height:476px;background:#474747"></div>
<div class="a" style="left:1px;top:22px;width:56px;height:10px;background:#2d2d2d"></div>
<svg style="left:5px;top:25px" width="8" height="5"><path d="M3,0 L0,2.500 L3,5Z M7,0 L4,2.500 L7,5Z" fill="#d0d0d0"/></svg>
<div class="a" style="left:20px;top:35px;width:18px;height:2px;background:repeating-linear-gradient(90deg,#2e2e2e 0 1px,#5a5a5a 1px 2px)"></div>
<div class="a" style="left:7px;top:45px;width:22px;height:18px;background:#2c2c2c;border:1px solid #262626"></div>
<div class="a" style="left:5px;top:84px;width:48px;height:1px;background:#3a3a3a"></div>
<div class="a" style="left:5px;top:219px;width:48px;height:1px;background:#3a3a3a"></div>
<svg style="left:9.5px;top:46.5px" width="16" height="16" viewBox="0 0 16 16"><path d="M4.5,1.5 L4.5,13 L7.3,10.3 L9.3,14.8 L11.2,14 L9.2,9.6 L13,9.6 Z" fill="#2a2a2a" stroke="#e4e4e4" stroke-width="1.2" stroke-linejoin="round"/></svg>
<svg style="left:34.5px;top:46.5px" width="16" height="16" viewBox="0 0 16 16"><path d="M4.5,1 L4.5,12.5 L7.3,9.8 L9.3,14 L11,13.2 L9,9.2 L12.8,9.2 Z" fill="#dcdcdc"/><path d="M13.5,15.5 L15.5,15.5 L15.5,13.5Z" fill="#d0d0d0"/></svg>
<svg style="left:9.5px;top:65.5px" width="16" height="16" viewBox="0 0 16 16"><path d="M6,6 L14,14" stroke="#dcdcdc" stroke-width="1.8"/><path d="M5,0.5 L6,3.8 L9.5,5 L6,6.2 L5,9.5 L4,6.2 L0.5,5 L4,3.8Z" fill="#dcdcdc"/></svg>
<svg style="left:34.5px;top:65.5px" width="16" height="16" viewBox="0 0 16 16"><ellipse cx="7.5" cy="7" rx="6" ry="3.6" fill="none" stroke="#dcdcdc" stroke-width="1.5" transform="rotate(-12 7.5 7)"/><path d="M8,5 L14,8.5 L11,9 L12,12 L10.5,12.5 L9.5,9.8 L7.8,11Z" fill="#dcdcdc"/><path d="M3,9 Q2,12 4,14" stroke="#dcdcdc" fill="none"/></svg>
<svg style="left:9.5px;top:87.5px" width="16" height="16" viewBox="0 0 16 16"><path d="M9.5,1 L14.5,6 L12.5,8 L7.5,3Z M7,3.8 L11.7,8.5 L8.5,12.5 L2,14.5 L4,8Z" fill="#dcdcdc"/><circle cx="6.8" cy="9.5" r="1.2" fill="#474747"/><path d="M2.5,14 L6.5,10" stroke="#474747" stroke-width=".9"/><path d="M13.5,15.5 L15.5,15.5 L15.5,13.5Z" fill="#d0d0d0"/></svg>
<svg style="left:34.5px;top:87.5px" width="16" height="16" viewBox="0 0 16 16"><path d="M10.5,1 L15,5.5 L13.2,7.3 L8.7,2.8Z M8.2,3.6 L12.4,7.8 L9.6,11.6 L4,13.2 L5.6,7.8Z" fill="#dcdcdc"/><circle cx="8" cy="9" r="1.1" fill="#474747"/><path d="M1,5 Q4,4 3,8 Q2,12 5,14.5" stroke="#dcdcdc" fill="none" stroke-width="1.3"/></svg>
<svg style="left:9.5px;top:106px" width="16" height="16" viewBox="0 0 16 16"><text x="8" y="13.5" font-family="Liberation Serif,serif" font-size="16" fill="#e0e0e0" text-anchor="middle">T</text><path d="M13.5,15.5 L15.5,15.5 L15.5,13.5Z" fill="#d0d0d0"/></svg>
<svg style="left:34.5px;top:106px" width="16" height="16" viewBox="0 0 16 16"><path d="M2.5,13.5 L13.5,2.5" stroke="#dcdcdc" stroke-width="1.6"/><path d="M13.5,15.5 L15.5,15.5 L15.5,13.5Z" fill="#d0d0d0"/></svg>
<svg style="left:9.5px;top:125px" width="16" height="16" viewBox="0 0 16 16"><rect x="2" y="3" width="12" height="10" fill="#9a9a9a" stroke="#d8d8d8" stroke-width="1"/><path d="M2,6.3 H14 M2,9.6 H14 M6,3 V13 M10,3 V13" stroke="#c4c4c4" stroke-width=".5"/><path d="M13.5,15.5 L15.5,15.5 L15.5,13.5Z" fill="#d0d0d0"/></svg>
<svg style="left:34.5px;top:125px" width="16" height="16" viewBox="0 0 16 16"><path d="M14.5,1 L15.5,2 L8.5,9.5 L7,8Z" fill="#dcdcdc"/><path d="M6.5,8.5 L8,10 Q7,13.5 1.5,13.5 Q4.5,12 4.2,10 Q5,8.3 6.500,8.500Z" fill="#dcdcdc"/><path d="M13.5,15.5 L15.5,15.5 L15.5,13.5Z" fill="#d0d0d0"/></svg>
<svg style="left:9.5px;top:144px" width="16" height="16" viewBox="0 0 16 16"><path d="M11.5,1.5 L14.5,4.5 L5.5,13.500 L2.500,10.500Z" fill="#dcdcdc"/><path d="M2,11.5 L4.5,14 L1,15Z" fill="#dcdcdc"/><path d="M10,3 L13,6" stroke="#474747" stroke-width=".9"/><path d="M13.5,15.5 L15.5,15.5 L15.5,13.5Z" fill="#d0d0d0"/></svg>
<svg style="left:34.5px;top:144px" width="16" height="16" viewBox="0 0 16 16"><path d="M8,2.500 L14.500,5.500 L9,12.500 L2,9.500Z" fill="#dcdcdc"/><path d="M2,9.5 L9,12.500 L9,14.500 L2,11.500Z" fill="#b0b0b0"/><path d="M5.500,5.800 L12,8.800" stroke="#474747" stroke-width=".9"/><path d="M13.5,15.5 L15.5,15.5 L15.5,13.5Z" fill="#d0d0d0"/></svg>
<svg style="left:9.5px;top:163px" width="16" height="16" viewBox="0 0 16 16"><path d="M3.3,5.2 A5.500,5.500 0 1 1 2.6,9" fill="none" stroke="#dcdcdc" stroke-width="1.5"/><path d="M1,2.500 L6,3.300 L2.500,7.300Z" fill="#dcdcdc"/><circle cx="8" cy="8" r="1" fill="#dcdcdc"/><path d="M13.5,15.5 L15.5,15.5 L15.5,13.5Z" fill="#d0d0d0"/></svg>
<svg style="left:34.5px;top:163px" width="16" height="16" viewBox="0 0 16 16"><rect x="1.500" y="6.500" width="8" height="8" fill="#777" stroke="#dcdcdc" stroke-width="1.1"/><rect x="5.500" y="1.500" width="9" height="9" fill="none" stroke="#dcdcdc" stroke-width="1.1"/><path d="M8,8 L12,4 M12,4 L9.500,4 M12,4 L12,6.500" stroke="#dcdcdc" stroke-width="1"/><path d="M13.5,15.5 L15.5,15.5 L15.5,13.5Z" fill="#d0d0d0"/></svg>
<svg style="left:9.5px;top:182px" width="16" height="16" viewBox="0 0 16 16"><path d="M2,1.500 L14,4 L7,8 L14,12 L2,14.500Z" fill="#dcdcdc"/><path d="M2,1.5 V14.500" stroke="#fff" stroke-width="1.200"/><path d="M13.5,15.5 L15.5,15.5 L15.5,13.5Z" fill="#d0d0d0"/></svg>
<svg style="left:34.5px;top:182px" width="16" height="16" viewBox="0 0 16 16"><path d="M2,2 L2,11 L4.300,8.800 L5.800,12 L7.300,11.300 L5.800,8.200 L8.500,8.200Z" fill="#dcdcdc"/><g fill="#dcdcdc"><rect x="9" y="2" width="1.800" height="1.800"/><rect x="12.500" y="2" width="1.800" height="1.800"/><rect x="12.500" y="6" width="1.800" height="1.800"/><rect x="12.500" y="10" width="1.800" height="1.800"/><rect x="12.500" y="13" width="1.800" height="1.800"/><rect x="9" y="13" width="1.800" height="1.800"/><rect x="5" y="13.200" width="1.800" height="1.800"/></g></svg>
<svg style="left:9.5px;top:201.5px" width="16" height="16" viewBox="0 0 16 16"><circle cx="5.500" cy="6" r="4" fill="#8a8a8a" stroke="#dcdcdc" stroke-width="1.100"/><circle cx="8.500" cy="8" r="4" fill="none" stroke="#dcdcdc" stroke-width="1.100"/><path d="M8,7 L14,11.500 L11.200,11.800 L12.500,14.500 L11,15 L9.800,12.300 L8,14Z" fill="#e4e4e4"/><path d="M13.5,15.5 L15.5,15.5 L15.5,13.5Z" fill="#d0d0d0"/></svg>
<svg style="left:34.5px;top:201.5px" width="16" height="16" viewBox="0 0 16 16"><path d="M2,1 V13.500 L14.500,15 M2,4.500 L12.500,11.500 M2,8 L9,12 M5,3 V14 M8,5 V14.300 M11,7 V14.600 M2,1 L14,10.500" stroke="#dcdcdc" stroke-width="1" fill="none"/><path d="M2,1 L2,13.500 L8,14.200 L8,5Z" fill="#9a9a9a" opacity=".7"/><path d="M13.5,15.5 L15.5,15.5 L15.5,13.5Z" fill="#d0d0d0"/></svg>
<svg style="left:9.5px;top:221.5px" width="16" height="16" viewBox="0 0 16 16"><rect x="1.500" y="2.500" width="13" height="11" fill="none" stroke="#dcdcdc" stroke-width="1.300"/><path d="M1.500,7 Q5,4.500 8,7.500 T14.500,8 M6,2.500 Q4,7 7.500,9 T8,13.500 M1.500,11 Q5,9.500 7,11 M11,2.500 Q10,6 12.500,8 T11,13.500" fill="none" stroke="#dcdcdc" stroke-width="1"/></svg>
<svg style="left:34.5px;top:221.5px" width="16" height="16" viewBox="0 0 16 16"><defs><linearGradient id="tg"><stop offset="0" stop-color="#3a3a3a"/><stop offset="1" stop-color="#e8e8e8"/></linearGradient></defs><rect x="1.500" y="2.500" width="13" height="11" fill="url(#tg)" stroke="#dcdcdc" stroke-width="1.200"/></svg>
<svg style="left:9.5px;top:241px" width="16" height="16" viewBox="0 0 16 16"><path d="M12,1 Q15,1 15,4 L11.500,7.500 L8.500,4.500Z" fill="#dcdcdc"/><path d="M8,5 L11,8 L4.500,14 L1.500,14.500 L2,11.500Z" fill="none" stroke="#dcdcdc" stroke-width="1.200"/><path d="M7.500,4 L12,8.500" stroke="#dcdcdc" stroke-width="1.500"/><path d="M13.5,15.5 L15.5,15.5 L15.5,13.5Z" fill="#d0d0d0"/></svg>
<svg style="left:34.5px;top:241px" width="16" height="16" viewBox="0 0 16 16"><rect x="1.500" y="1.500" width="7" height="7" fill="#8a8a8a" stroke="#dcdcdc" stroke-width="1"/><circle cx="10" cy="10" r="4.500" fill="#6a6a6a" stroke="#dcdcdc" stroke-width="1.100"/><circle cx="7.500" cy="7.500" r="3.500" fill="none" stroke="#dcdcdc" stroke-width=".9"/></svg>
<svg style="left:9.5px;top:260.5px" width="16" height="16" viewBox="0 0 16 16"><rect x="4.500" y="5.500" width="8" height="9" rx="1" fill="#8a8a8a" stroke="#dcdcdc" stroke-width="1.100"/><rect x="6.500" y="2.500" width="4" height="3" fill="#dcdcdc"/><circle cx="8.500" cy="10" r="2" fill="#dcdcdc"/><path d="M0.500,2 L4,2 M1,4.500 L3.500,4.500" stroke="#b0b0b0" stroke-width="1"/><path d="M13.5,15.5 L15.5,15.5 L15.5,13.5Z" fill="#d0d0d0"/></svg>
<svg style="left:34.5px;top:260.5px" width="16" height="16" viewBox="0 0 16 16"><path d="M1.500,1 V14.500 H15" stroke="#dcdcdc" stroke-width="1.200" fill="none"/><rect x="3.500" y="7" width="2.500" height="7" fill="#dcdcdc"/><rect x="7.200" y="3" width="2.500" height="11" fill="#dcdcdc"/><rect x="11" y="8.500" width="2.500" height="5.500" fill="#dcdcdc"/><path d="M13.5,15.5 L15.5,15.5 L15.5,13.5Z" fill="#d0d0d0"/></svg>
<svg style="left:9.5px;top:281px" width="16" height="16" viewBox="0 0 16 16"><rect x="3.500" y="3.500" width="9" height="9" fill="none" stroke="#dcdcdc" stroke-width="1.200"/><path d="M0.500,3.500 H3 M13,3.500 H15.500 M0.500,12.500 H3 M13,12.500 H15.500 M3.500,0.500 V3 M12.500,0.500 V3 M3.500,13 V15.500 M12.500,13 V15.500" stroke="#c8c8c8" stroke-width="1"/></svg>
<svg style="left:34.5px;top:281px" width="16" height="16" viewBox="0 0 16 16"><path d="M13.500,1 L15,2.500 L9,8.500 L7.500,7Z" fill="#dcdcdc"/><path d="M7,7.500 L8.500,9 L2,14.500 L1.500,14Z" fill="#dcdcdc"/><path d="M5,7 L9,11" stroke="#dcdcdc" stroke-width="1.600"/><path d="M13.5,15.5 L15.5,15.5 L15.5,13.5Z" fill="#d0d0d0"/></svg>
<svg style="left:9.5px;top:299.5px" width="16" height="16" viewBox="0 0 16 16"><path d="M4.500,15 L3,11 L1,7.500 Q1.500,6.500 2.800,7.300 L4.200,9.500 L4.200,3 Q5,2 5.800,3 L6,7 L6.300,1.800 Q7.200,0.800 8,1.800 L8.200,7 L8.800,2.500 Q9.700,1.700 10.400,2.700 L10.300,7.500 L11.200,4.500 Q12.200,4 12.600,5 L12,11 L11,15Z" fill="#dcdcdc"/><path d="M13.5,15.5 L15.5,15.5 L15.5,13.5Z" fill="#d0d0d0"/></svg>
<svg style="left:34.5px;top:299.5px" width="16" height="16" viewBox="0 0 16 16"><circle cx="6.500" cy="6.500" r="4.500" fill="#6a6a6a" stroke="#dcdcdc" stroke-width="1.600"/><path d="M10,10 L14.500,14.500" stroke="#dcdcdc" stroke-width="2.200"/></svg>
<div class="a" style="left:21px;top:335px;width:27px;height:27px;background:#fff;border:1px solid #2a2a2a"></div>
<svg style="left:21px;top:335px" width="27" height="27"><path d="M1,26 L26,1" stroke="#b02834" stroke-width="1.200"/><rect x="7.500" y="7.500" width="12" height="12" fill="#3c463e" stroke="#6a3a3a" stroke-width="1"/><path d="M7.500,19.500 L19.500,7.500" stroke="#a02030" stroke-width="1.200"/></svg>
<div class="a" style="left:7px;top:319px;width:27px;height:29px;background:radial-gradient(circle at 50% 50%,#52b863 0%,#4ea566 60%,#4b9468 100%);border:1px solid #a8ccb2;box-shadow:0 0 0 1px #2f4a38"></div>
<svg style="left:39px;top:319px" width="10" height="10"><path d="M1.500,3 Q7,2 7.500,8" fill="none" stroke="#d8d8d8" stroke-width="1.200"/><path d="M0,3 L3,0.500 L3,5.500Z M5.500,7 L9.800,7 L7.600,10Z" fill="#d8d8d8"/></svg>
<svg style="left:8px;top:352px" width="9" height="9"><rect x="3.500" y="3.500" width="5" height="5" fill="#333" stroke="#e0e0e0" stroke-width="1.200"/><rect x="0.500" y="0.500" width="5" height="5" fill="#fff" stroke="#222" stroke-width="1"/></svg>
<div class="a" style="left:23px;top:367px;width:15px;height:15px;background:#2c2c2c"></div>
<div class="a" style="left:10px;top:369px;width:11px;height:11px;background:#fafafa;border:1px solid #333"></div>
<div class="a" style="left:25px;top:369px;width:11px;height:11px;background:#4fa863;border:1px solid #2f5a3a"></div>
<div class="a" style="left:40px;top:369px;width:11px;height:11px;background:#fafafa;border:1px solid #333"></div>
<svg style="left:40px;top:369px" width="11" height="11"><path d="M1,10 L10,1" stroke="#d02020" stroke-width="1.800"/></svg>
<div class="a" style="left:8px;top:388px;width:15px;height:13px;background:#2c2c2c"></div>
<svg style="left:9px;top:389px" width="13" height="11"><circle cx="5.500" cy="5" r="3.800" fill="#9a9a9a" stroke="#dcdcdc" stroke-width="1.100"/><rect x="6" y="5.500" width="6" height="5" fill="#777" stroke="#dcdcdc" stroke-width="1"/></svg>
<svg style="left:23.5px;top:389px" width="13" height="11"><circle cx="5.500" cy="5" r="3.800" fill="none" stroke="#dcdcdc" stroke-width="1.100"/><rect x="6" y="5.500" width="6" height="5" fill="none" stroke="#dcdcdc" stroke-width="1"/></svg>
<svg style="left:38px;top:389px" width="13" height="11"><circle cx="5.500" cy="5" r="3.800" fill="#9a9a9a" stroke="#dcdcdc" stroke-width="1.100"/><rect x="6" y="5.500" width="6" height="5" fill="none" stroke="#dcdcdc" stroke-width="1"/></svg>
<svg style="left:20px;top:408px" width="18" height="13"><rect x="4.500" y="0.500" width="13" height="9" fill="#9a9a9a" stroke="#e0e0e0" stroke-width="1"/><rect x="0.500" y="3.500" width="13" height="9" fill="#8a8a8a" stroke="#e0e0e0" stroke-width="1"/><rect x="0.500" y="3.500" width="13" height="2" fill="#e0e0e0"/></svg>
<div class="a" style="left:814px;top:247px;width:169px;height:135px;background:#3a3a3a"></div>
<div class="a" style="left:814px;top:248px;width:15px;height:16px;background:#5a5a5a"></div><div class="a" style="left:830px;top:248px;width:15px;height:16px;background:#5a5a5a"></div><div class="a" style="left:846px;top:248px;width:109px;height:16px;background:#5a5a5a"></div><div class="a" style="left:956px;top:248px;width:27px;height:16px;background:#5a5a5a"></div>
<svg style="left:885px;top:249.5px" width="12" height="13" viewBox="0 0 12 13"><rect x="-.5" y="-.5" width="13" height="14" fill="#fff" stroke="#222" stroke-width="1"/><circle cx="6" cy="6.500" r="6.300" fill="#7fd486"/><circle cx="5" cy="5.500" r="3" fill="#8fe096"/></svg>
<div class="t" style="left:902px;top:252.5px;font-size:10px;color:#d4d4d4;letter-spacing:.5px">&lt;...</div>
<svg style="left:959px;top:251px" width="10" height="10"><circle cx="5" cy="5" r="3.500" fill="#3a3a3a" stroke="#dcdcdc" stroke-width="1.300"/></svg>
<div class="a" style="left:814px;top:265px;width:15px;height:15px;background:#5a5a5a"></div><div class="a" style="left:830px;top:265px;width:15px;height:15px;background:#5a5a5a"></div><div class="a" style="left:846px;top:265px;width:109px;height:15px;background:#5a5a5a"></div><div class="a" style="left:956px;top:265px;width:27px;height:15px;background:#5a5a5a"></div>
<svg style="left:885px;top:266px" width="12" height="13" viewBox="0 0 12 13"><rect x="-.5" y="-.5" width="13" height="14" fill="#fff" stroke="#222" stroke-width="1"/><circle cx="6" cy="6.500" r="6.300" fill="#3f7a66"/><circle cx="6" cy="6.500" r="3" fill="#4a8a74"/></svg>
<div class="t" style="left:902px;top:269px;font-size:10px;color:#d4d4d4;letter-spacing:.5px">&lt;...</div>
<svg style="left:959px;top:267.5px" width="10" height="10"><circle cx="5" cy="5" r="3.500" fill="#3a3a3a" stroke="#dcdcdc" stroke-width="1.300"/></svg>
<div class="a" style="left:814px;top:281px;width:15px;height:16px;background:#5a5a5a"></div><div class="a" style="left:830px;top:281px;width:15px;height:16px;background:#5a5a5a"></div><div class="a" style="left:846px;top:281px;width:109px;height:16px;background:#5a5a5a"></div><div class="a" style="left:956px;top:281px;width:27px;height:16px;background:#5a5a5a"></div>
<svg style="left:885px;top:282.5px" width="12" height="13" viewBox="0 0 12 13"><rect x="-.5" y="-.5" width="13" height="14" fill="#fff" stroke="#222" stroke-width="1"/><rect x="0" y="4" width="12" height="9" fill="#7cc4d8"/><rect x="0" y="0" width="12" height="5" fill="#c4e6f0"/></svg>
<div class="t" style="left:902px;top:285.5px;font-size:10px;color:#d4d4d4;letter-spacing:.5px">&lt;...</div>
<svg style="left:959px;top:284px" width="10" height="10"><circle cx="5" cy="5" r="3.500" fill="#3a3a3a" stroke="#dcdcdc" stroke-width="1.300"/></svg>
<div class="a" style="left:814px;top:298px;width:15px;height:15px;background:#5a5a5a"></div><div class="a" style="left:830px;top:298px;width:15px;height:15px;background:#5a5a5a"></div><div class="a" style="left:846px;top:298px;width:109px;height:15px;background:#5a5a5a"></div><div class="a" style="left:956px;top:298px;width:27px;height:15px;background:#5a5a5a"></div>
<svg style="left:885px;top:299px" width="12" height="13" viewBox="0 0 12 13"><rect x="-.5" y="-.5" width="13" height="14" fill="#fff" stroke="#222" stroke-width="1"/><circle cx="6" cy="6.500" r="6.300" fill="#a8b4cc"/></svg>
<div class="t" style="left:902px;top:302px;font-size:10px;color:#d4d4d4;letter-spacing:.5px">&lt;...</div>
<svg style="left:959px;top:300.5px" width="10" height="10"><circle cx="5" cy="5" r="3.600" fill="#bdbdbd" stroke="#d8d8d8" stroke-width="1"/></svg>
<div class="a" style="left:814px;top:314px;width:15px;height:16px;background:#5a5a5a"></div><div class="a" style="left:830px;top:314px;width:15px;height:16px;background:#5a5a5a"></div><div class="a" style="left:846px;top:314px;width:109px;height:16px;background:#5a5a5a"></div><div class="a" style="left:956px;top:314px;width:27px;height:16px;background:#5a5a5a"></div>
<svg style="left:885px;top:315.5px" width="12" height="13" viewBox="0 0 12 13"><rect x="-.5" y="-.5" width="13" height="14" fill="#fff" stroke="#222" stroke-width="1"/><path d="M1.500,12 Q1,2 10.500,2.500" fill="none" stroke="#9cc8a8" stroke-width="1.200"/></svg>
<div class="t" style="left:902px;top:318.5px;font-size:10px;color:#d4d4d4;letter-spacing:.5px">&lt;...</div>
<svg style="left:957px;top:315px" width="14" height="14"><circle cx="7" cy="7" r="5.800" fill="none" stroke="#c8c8d8" stroke-width="1.200"/><circle cx="7" cy="7" r="3.300" fill="#3a3a3a" stroke="#e0e0e0" stroke-width="1.200"/></svg>
<div class="a" style="left:971px;top:318px;width:8px;height:8px;background:#5f7fd8;border:2px solid #26389a"></div>
<svg style="left:816px;top:318px" width="12" height="8"><path d="M.5,4 Q6,-2.500 11.500,4 Q6,10.500 .5,4Z" fill="#e4e4e4"/><circle cx="6" cy="4" r="2.300" fill="#333"/><circle cx="5.200" cy="3.200" r=".8" fill="#eee"/></svg>
<div class="a" style="left:814px;top:331px;width:15px;height:15px;background:#5a5a5a"></div><div class="a" style="left:830px;top:331px;width:15px;height:15px;background:#5a5a5a"></div><div class="a" style="left:846px;top:331px;width:109px;height:15px;background:#5a5a5a"></div><div class="a" style="left:956px;top:331px;width:27px;height:15px;background:#5a5a5a"></div>
<svg style="left:885px;top:332px" width="12" height="13" viewBox="0 0 12 13"><rect x="-.5" y="-.5" width="13" height="14" fill="#fff" stroke="#222" stroke-width="1"/><path d="M2,12 Q1,3 10.500,3" fill="none" stroke="#6aaa80" stroke-width="1.600"/><circle cx="7" cy="8" r="3.500" fill="#f4ece8"/></svg>
<div class="t" style="left:902px;top:335px;font-size:10px;color:#d4d4d4;letter-spacing:.5px">&lt;...</div>
<svg style="left:959px;top:333.5px" width="10" height="10"><circle cx="5" cy="5" r="3.500" fill="#3a3a3a" stroke="#dcdcdc" stroke-width="1.300"/></svg>
<svg style="left:816px;top:334.5px" width="12" height="8"><path d="M.5,4 Q6,-2.500 11.500,4 Q6,10.500 .5,4Z" fill="#e4e4e4"/><circle cx="6" cy="4" r="2.300" fill="#333"/><circle cx="5.200" cy="3.200" r=".8" fill="#eee"/></svg>
<div class="a" style="left:814px;top:347px;width:15px;height:16px;background:#5a5a5a"></div><div class="a" style="left:830px;top:347px;width:15px;height:16px;background:#5a5a5a"></div><div class="a" style="left:846px;top:347px;width:109px;height:16px;background:#5a5a5a"></div><div class="a" style="left:956px;top:347px;width:27px;height:16px;background:#5a5a5a"></div>
<svg style="left:885px;top:348.5px" width="12" height="13" viewBox="0 0 12 13"><rect x="-.5" y="-.5" width="13" height="14" fill="#fff" stroke="#222" stroke-width="1"/><ellipse cx="6" cy="6.500" rx="3.200" ry="5.500" fill="#c8244a" transform="rotate(-12 6 6.500)"/></svg>
<div class="t" style="left:902px;top:351.5px;font-size:10px;color:#d4d4d4;letter-spacing:.5px">&lt;...</div>
<svg style="left:959px;top:350px" width="10" height="10"><circle cx="5" cy="5" r="3.500" fill="#3a3a3a" stroke="#dcdcdc" stroke-width="1.300"/></svg>
<div class="a" style="left:814px;top:364px;width:15px;height:15px;background:#5a5a5a"></div><div class="a" style="left:830px;top:364px;width:15px;height:15px;background:#5a5a5a"></div><div class="a" style="left:846px;top:364px;width:109px;height:15px;background:#5a5a5a"></div><div class="a" style="left:956px;top:364px;width:27px;height:15px;background:#5a5a5a"></div>
<svg style="left:885px;top:365px" width="12" height="13" viewBox="0 0 12 13"><rect x="-.5" y="-.5" width="13" height="14" fill="#fff" stroke="#222" stroke-width="1"/><ellipse cx="6" cy="7" rx="5" ry="5.500" fill="#e8365c"/><ellipse cx="7.500" cy="5" rx="2.500" ry="3" fill="#f0507a"/></svg>
<div class="t" style="left:902px;top:368px;font-size:10px;color:#d4d4d4;letter-spacing:.5px">&lt;...</div>
<svg style="left:959px;top:366.5px" width="10" height="10"><circle cx="5" cy="5" r="3.500" fill="#3a3a3a" stroke="#dcdcdc" stroke-width="1.300"/></svg>
<div class="a" style="left:848px;top:248px;width:4px;height:134px;background:#5878d0;border-right:1px solid #3a56b0"></div>
<div class="a" style="left:983px;top:247px;width:11px;height:135px;background:#303030"></div>
<svg style="left:985px;top:252px" width="7" height="5"><path d="M3.500,0 L7,4.500 H0Z" fill="#ececec"/></svg>
<svg style="left:985px;top:373px" width="7" height="5"><path d="M3.500,4.500 L7,0 H0Z" fill="#ececec"/></svg>
<div class="a" style="left:984px;top:277px;width:9px;height:18px;background:#7e7e7e;border:1px solid #8e8e8e"></div>
<div class="t" style="left:813px;top:387px;font-size:9.500px;color:#d8d8d8">1 个图层</div>
<svg style="left:884px;top:385px" width="12" height="12"><circle cx="7" cy="4.500" r="3.300" fill="none" stroke="#e0e0e0" stroke-width="1.400"/><path d="M4.500,7 L.8,11" stroke="#e0e0e0" stroke-width="1.800"/></svg>
<svg style="left:905px;top:385px" width="11" height="12"><rect x="3.500" y="3.500" width="7" height="8" fill="#9a9a9a" stroke="#e0e0e0"/><rect x=".5" y=".5" width="6" height="7" fill="#555" stroke="#e0e0e0"/></svg>
<svg style="left:925px;top:386px" width="13" height="10"><rect x="5.500" y="2.500" width="7" height="7" fill="#bbb" stroke="#e0e0e0"/><path d="M1,1 V5 H4 M3,1 H1" stroke="#e0e0e0" fill="none" stroke-width="1.200"/></svg>
<svg style="left:947px;top:385px" width="11" height="12"><rect x="1.500" y="2.500" width="9" height="9" fill="#bbb" stroke="#e0e0e0"/><path d="M7,.5 L10.500,4 H7Z" fill="#484848" stroke="#e0e0e0" stroke-width=".8"/></svg>
<svg style="left:966px;top:384px" width="12" height="14"><g fill="none" stroke="#6a6a6a" stroke-width="1.100"><path d="M1,3.500 H11 M4,3.500 V1.500 H8 V3.500 M2.500,3.500 L3,13 H9 L9.500,3.500 M5,6 V11 M7,6 V11"/></g></svg>
</div></body></html>
